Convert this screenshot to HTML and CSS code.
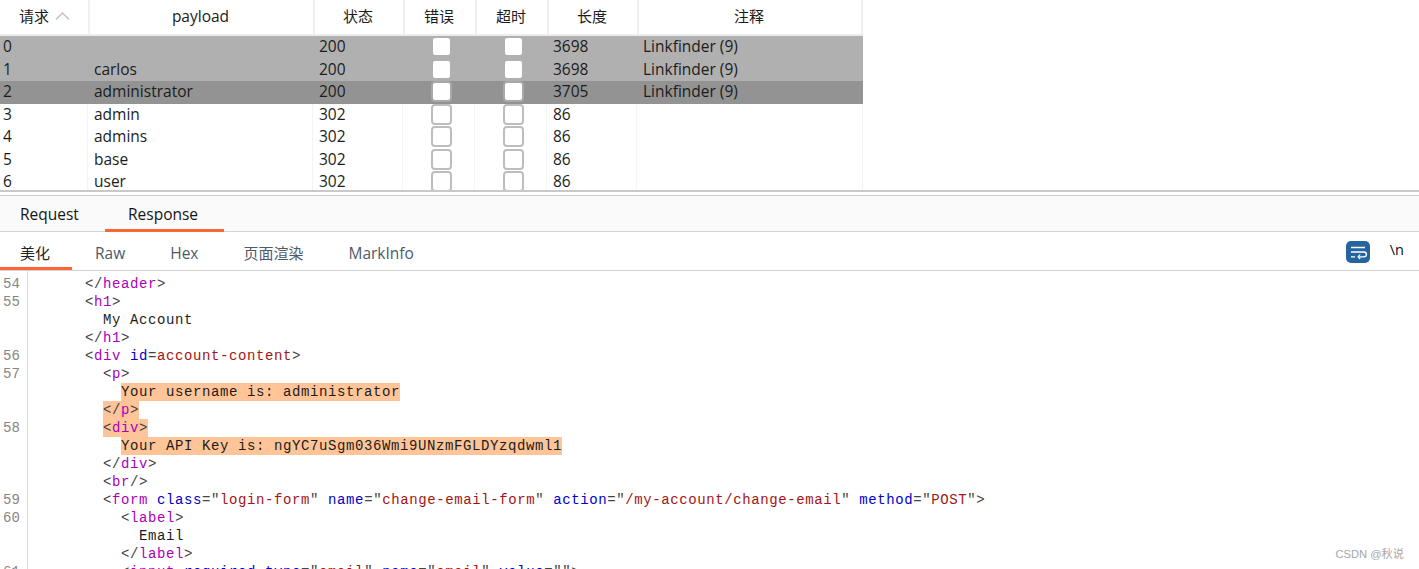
FILE: index.html
```html
<!DOCTYPE html>
<html lang="zh">
<head>
    <meta charset="UTF-8">
    <meta name="viewport" content="width=device-width, initial-scale=1.0">
    <title>Intruder</title>
    <link rel="stylesheet" href="styles.css">
</head>
<body>
    <div class="results">
        <div class="row head">
            <div class="cell center cjk">请求 <svg class="sort" width="15" height="8" viewBox="0 0 15 8"><path d="M1 7.5 7.5 1 14 7.5" fill="none" stroke="#c4c4c4" stroke-width="1.5"/></svg></div>
            <div class="cell center">payload</div>
            <div class="cell center cjk">状态</div>
            <div class="cell center cjk">错误</div>
            <div class="cell center cjk">超时</div>
            <div class="cell center cjk">长度</div>
            <div class="cell center cjk">注释</div>
        </div>
        <div class="row marked">
            <div class="cell">0</div><div class="cell"></div><div class="cell">200</div>
            <div class="cell box"><span class="check"></span></div><div class="cell box"><span class="check"></span></div>
            <div class="cell">3698</div><div class="cell">Linkfinder (9)</div>
        </div>
        <div class="row marked">
            <div class="cell">1</div><div class="cell">carlos</div><div class="cell">200</div>
            <div class="cell box"><span class="check"></span></div><div class="cell box"><span class="check"></span></div>
            <div class="cell">3698</div><div class="cell">Linkfinder (9)</div>
        </div>
        <div class="row selected">
            <div class="cell">2</div><div class="cell">administrator</div><div class="cell">200</div>
            <div class="cell box"><span class="check"></span></div><div class="cell box"><span class="check"></span></div>
            <div class="cell">3705</div><div class="cell">Linkfinder (9)</div>
        </div>
        <div class="row">
            <div class="cell">3</div><div class="cell">admin</div><div class="cell">302</div>
            <div class="cell box"><span class="check"></span></div><div class="cell box"><span class="check"></span></div>
            <div class="cell">86</div><div class="cell"></div>
        </div>
        <div class="row">
            <div class="cell">4</div><div class="cell">admins</div><div class="cell">302</div>
            <div class="cell box"><span class="check"></span></div><div class="cell box"><span class="check"></span></div>
            <div class="cell">86</div><div class="cell"></div>
        </div>
        <div class="row">
            <div class="cell">5</div><div class="cell">base</div><div class="cell">302</div>
            <div class="cell box"><span class="check"></span></div><div class="cell box"><span class="check"></span></div>
            <div class="cell">86</div><div class="cell"></div>
        </div>
        <div class="row">
            <div class="cell">6</div><div class="cell">user</div><div class="cell">302</div>
            <div class="cell box"><span class="check"></span></div><div class="cell box"><span class="check"></span></div>
            <div class="cell">86</div><div class="cell"></div>
        </div>
    </div>

    <div class="splitter"></div>

    <div class="tabs">
        <div class="tab">Request</div>
        <div class="tab active">Response</div>
    </div>

    <div class="subtabs">
        <div class="subtab active cjk">美化</div>
        <div class="subtab">Raw</div>
        <div class="subtab">Hex</div>
        <div class="subtab cjk">页面渲染</div>
        <div class="subtab">MarkInfo</div>
        <div class="tools">
            <svg class="wrap" width="24" height="22" viewBox="0 0 24 22">
                <rect width="24" height="22" rx="5" fill="#26649f"/>
                <path d="M5 6.5h14M5 11h13a2.4 2.4 0 0 1 0 4.8h-6M5 15.8h4" fill="none" stroke="#fff" stroke-width="1.3"/>
                <path d="M14.2 13.6 12 15.8l2.2 2.2" fill="none" stroke="#fff" stroke-width="1.1"/>
            </svg>
            <span class="newline">\n</span>
        </div>
    </div>

    <div class="code">
        <div class="gutter">
            <span class="num">54</span>
            <span class="num">55</span>
            <span class="num"></span>
            <span class="num"></span>
            <span class="num">56</span>
            <span class="num">57</span>
            <span class="num"></span>
            <span class="num"></span>
            <span class="num">58</span>
            <span class="num"></span>
            <span class="num"></span>
            <span class="num"></span>
            <span class="num">59</span>
            <span class="num">60</span>
            <span class="num"></span>
            <span class="num"></span>
            <span class="num">61</span>
        </div>
        <pre class="source">&lt;/<b>header</b>&gt;
&lt;<b>h1</b>&gt;
  <i>My Account</i>
&lt;/<b>h1</b>&gt;
&lt;<b>div</b> <u>id</u>=<s>account-content</s>&gt;
  &lt;<b>p</b>&gt;
    <mark><i>Your username is: administrator</i></mark>
  <mark>&lt;/<b>p</b>&gt;</mark>
  <mark>&lt;<b>div</b>&gt;</mark>
    <mark><i>Your API Key is: ngYC7uSgm036Wmi9UNzmFGLDYzqdwml1</i></mark>
  &lt;/<b>div</b>&gt;
  &lt;<b>br</b>/&gt;
  &lt;<b>form</b> <u>class</u>="<s>login-form</s>" <u>name</u>="<s>change-email-form</s>" <u>action</u>="<s>/my-account/change-email</s>" <u>method</u>="<s>POST</s>"&gt;
    &lt;<b>label</b>&gt;
      <i>Email</i>
    &lt;/<b>label</b>&gt;
    &lt;<b>input</b> <u>required</u> <u>type</u>="<s>email</s>" <u>name</u>="<s>email</s>" <u>value</u>=""&gt;</pre>
    </div>

    <div class="watermark">CSDN @秋说</div>
</body>
</html>
```

FILE: styles.css
```css
* {
    box-sizing: border-box;
}
html, body {
    height: 100%;
}
body {
    margin: 0;
    height: 569px;
    overflow: hidden;
    position: relative;
    background: #fff;
    color: #1c1c1c;
    font-family: 'Open Sans', 'Noto Sans CJK SC', sans-serif;
    font-size: 15.5px;
}
.cjk {
    font-size: 15px;
}

/* results table */
.results {
    height: 190px;
    overflow: hidden;
}
.row {
    display: grid;
    grid-template-columns: 88px 225px 90px 72px 72px 90px 226px;
    width: 863px;
    height: 22.5px;
    line-height: 20px;
}
.row.head {
    grid-template-columns: 90px 225px 90px 72px 72px 90px 224px;
    height: 36px;
    line-height: 33px;
    border-bottom: 2px solid #ececec;
}
.cell {
    padding-left: 6px;
    border-right: 1px solid #f4f4f4;
    overflow: hidden;
    white-space: nowrap;
}
.cell:first-child {
    padding-left: 3px;
}
.head .cell {
    padding: 0 2px 0 0;
    border-right: 2px solid #f0f0f0;
}
.head .cell:first-child {
    padding: 0 0 0 1px;
}
.center {
    text-align: center;
}
.sort {
    margin-left: 2px;
    vertical-align: 2px;
}
.box {
    display: flex;
    justify-content: center;
    align-items: center;
    padding: 0 0 1.5px 6px;
    overflow: visible;
}
.check {
    display: block;
    width: 21px;
    height: 21px;
    flex: none;
    background: #fff;
    border: 2px solid #bdbdbd;
    border-radius: 4px;
}
.marked {
    background: #b0b0b0;
}
.selected {
    background: #939393;
}
.marked .cell, .selected .cell {
    border-right-color: transparent;
}
.marked .check {
    border-color: #b0b0b0;
}
.selected .check {
    border-color: #a8a8a8;
}

.splitter {
    height: 6px;
    border-top: 2px solid #c9c9c9;
    border-bottom: 1px solid #c9c9c9;
    background: #fff;
}

/* tabs */
.tabs {
    display: flex;
    height: 36px;
    background: #fafafa;
    border-bottom: 1px solid #d2d2d2;
}
.tab {
    width: 105px;
    padding-left: 20px;
    line-height: 36px;
    color: #151515;
}
.tab.active {
    width: 119px;
    height: 36px;
    padding-left: 23px;
    border-bottom: 3px solid #ff6633;
}
.subtabs {
    display: flex;
    height: 39px;
    border-bottom: 1px solid #d2d2d2;
    color: #4e5a68;
    line-height: 43px;
}
.subtab {
    padding: 0 20px 0 25px;
}
.subtab:nth-child(1) {
    width: 72px;
    height: 38px;
    padding: 0 0 0 20px;
    color: #222;
    border-bottom: 3px solid #ff6633;
}
.subtab:nth-child(2) {
    padding-left: 23px;
}
.tools {
    margin-left: auto;
    display: flex;
    align-items: flex-start;
    padding-right: 15px;
}
.wrap {
    margin-top: 8.5px;
}
.newline {
    margin-left: 20px;
    font-size: 14.5px;
    color: #111;
    line-height: 36px;
}

/* code view */
.code {
    display: flex;
    height: 298px;
    overflow: hidden;
    font-family: 'Liberation Mono', monospace;
    font-size: 14px;
    letter-spacing: 0.6px;
    line-height: 18px;
}
.gutter {
    width: 28px;
    height: 400px;
    padding: 4px 0 0 3px;
    border-right: 1px solid #dcdcdc;
    color: #868686;
    letter-spacing: 0;
    flex: none;
}
.num {
    display: block;
    height: 18px;
}
.source {
    margin: 4px 0 0 57px;
    font: inherit;
    color: #444;
}
.source b {
    font-weight: normal;
    color: #aa00bb;
}
.source i {
    font-style: normal;
    color: #1c1c1c;
}
.source u {
    text-decoration: none;
    color: #0000cc;
}
.source s {
    text-decoration: none;
    color: #a31515;
}
.source mark {
    display: inline-block;
    height: 18px;
    color: #444;
    background: #ffc599;
}

.watermark {
    position: absolute;
    right: 15px;
    bottom: 8px;
    font-size: 11.2px;
    color: #a6a6a6;
    font-family: 'Liberation Sans', 'Noto Sans CJK SC', sans-serif;
}
```
